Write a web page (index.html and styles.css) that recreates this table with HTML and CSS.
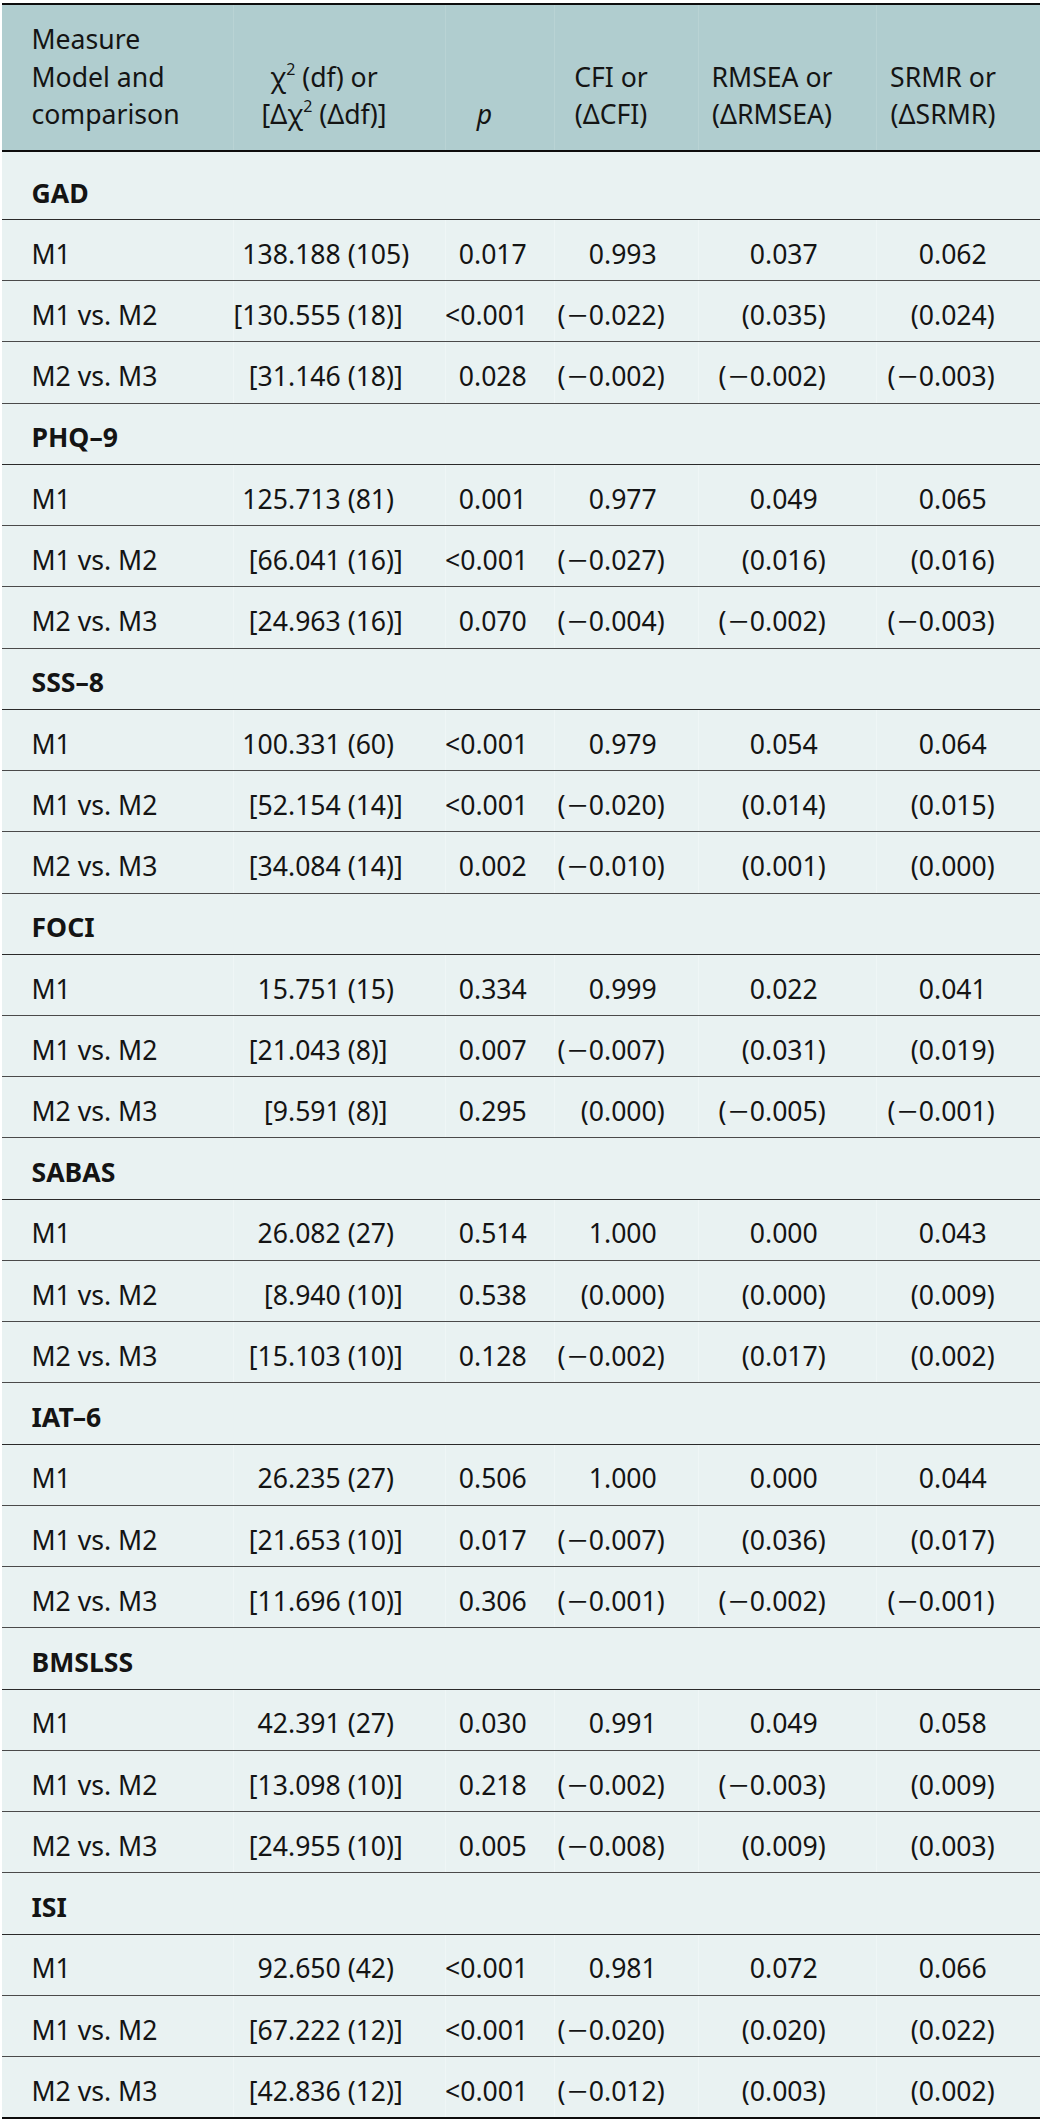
FILE: index.html
```html
<!DOCTYPE html>
<html lang="en">
<head>
<meta charset="utf-8">
<title>Measurement invariance</title>
<link rel="stylesheet" href="styles.css">
</head>
<body>
<div class="wrap">
<table class="tbl">
<colgroup>
<col class="w1"><col class="w2"><col class="w3"><col class="w4"><col class="w5"><col class="w6">
</colgroup>
<thead>
<tr>
<th class="h1">Measure<br>Model and<br>comparison</th>
<th class="hc">χ<sup>2</sup> (df) or<br>[Δχ<sup>2</sup> (Δdf)]</th>
<th class="hc"><i>p</i></th>
<th class="hc">CFI or<br>(ΔCFI)</th>
<th class="hc">RMSEA or<br>(ΔRMSEA)</th>
<th class="hc">SRMR or<br>(ΔSRMR)</th>
</tr>
</thead>
<tbody>
<tr class="sec first"><td colspan="6">GAD</td></tr>
<tr><td class="lbl">M1</td><td class="c2">138<span class="f">.188 (105)</span></td><td class="c3">0<span class="f">.017</span></td><td class="c4">0<span class="f">.993</span></td><td class="c5">0<span class="f">.037</span></td><td class="c6">0<span class="f">.062</span></td></tr>
<tr><td class="lbl">M1 vs. M2</td><td class="c2">[130<span class="f">.555 (18)]</span></td><td class="c3">&lt;0<span class="f">.001</span></td><td class="c4">(<span class="mn">−</span>0<span class="f">.022)</span></td><td class="c5">(0<span class="f">.035)</span></td><td class="c6">(0<span class="f">.024)</span></td></tr>
<tr><td class="lbl">M2 vs. M3</td><td class="c2">[31<span class="f">.146 (18)]</span></td><td class="c3">0<span class="f">.028</span></td><td class="c4">(<span class="mn">−</span>0<span class="f">.002)</span></td><td class="c5">(<span class="mn">−</span>0<span class="f">.002)</span></td><td class="c6">(<span class="mn">−</span>0<span class="f">.003)</span></td></tr>

<tr class="sec"><td colspan="6">PHQ–9</td></tr>
<tr><td class="lbl">M1</td><td class="c2">125<span class="f">.713 (81)</span></td><td class="c3">0<span class="f">.001</span></td><td class="c4">0<span class="f">.977</span></td><td class="c5">0<span class="f">.049</span></td><td class="c6">0<span class="f">.065</span></td></tr>
<tr><td class="lbl">M1 vs. M2</td><td class="c2">[66<span class="f">.041 (16)]</span></td><td class="c3">&lt;0<span class="f">.001</span></td><td class="c4">(<span class="mn">−</span>0<span class="f">.027)</span></td><td class="c5">(0<span class="f">.016)</span></td><td class="c6">(0<span class="f">.016)</span></td></tr>
<tr><td class="lbl">M2 vs. M3</td><td class="c2">[24<span class="f">.963 (16)]</span></td><td class="c3">0<span class="f">.070</span></td><td class="c4">(<span class="mn">−</span>0<span class="f">.004)</span></td><td class="c5">(<span class="mn">−</span>0<span class="f">.002)</span></td><td class="c6">(<span class="mn">−</span>0<span class="f">.003)</span></td></tr>

<tr class="sec"><td colspan="6">SSS–8</td></tr>
<tr><td class="lbl">M1</td><td class="c2">100<span class="f">.331 (60)</span></td><td class="c3">&lt;0<span class="f">.001</span></td><td class="c4">0<span class="f">.979</span></td><td class="c5">0<span class="f">.054</span></td><td class="c6">0<span class="f">.064</span></td></tr>
<tr><td class="lbl">M1 vs. M2</td><td class="c2">[52<span class="f">.154 (14)]</span></td><td class="c3">&lt;0<span class="f">.001</span></td><td class="c4">(<span class="mn">−</span>0<span class="f">.020)</span></td><td class="c5">(0<span class="f">.014)</span></td><td class="c6">(0<span class="f">.015)</span></td></tr>
<tr><td class="lbl">M2 vs. M3</td><td class="c2">[34<span class="f">.084 (14)]</span></td><td class="c3">0<span class="f">.002</span></td><td class="c4">(<span class="mn">−</span>0<span class="f">.010)</span></td><td class="c5">(0<span class="f">.001)</span></td><td class="c6">(0<span class="f">.000)</span></td></tr>

<tr class="sec"><td colspan="6">FOCI</td></tr>
<tr><td class="lbl">M1</td><td class="c2">15<span class="f">.751 (15)</span></td><td class="c3">0<span class="f">.334</span></td><td class="c4">0<span class="f">.999</span></td><td class="c5">0<span class="f">.022</span></td><td class="c6">0<span class="f">.041</span></td></tr>
<tr><td class="lbl">M1 vs. M2</td><td class="c2">[21<span class="f">.043 (8)]</span></td><td class="c3">0<span class="f">.007</span></td><td class="c4">(<span class="mn">−</span>0<span class="f">.007)</span></td><td class="c5">(0<span class="f">.031)</span></td><td class="c6">(0<span class="f">.019)</span></td></tr>
<tr><td class="lbl">M2 vs. M3</td><td class="c2">[9<span class="f">.591 (8)]</span></td><td class="c3">0<span class="f">.295</span></td><td class="c4">(0<span class="f">.000)</span></td><td class="c5">(<span class="mn">−</span>0<span class="f">.005)</span></td><td class="c6">(<span class="mn">−</span>0<span class="f">.001)</span></td></tr>

<tr class="sec"><td colspan="6">SABAS</td></tr>
<tr><td class="lbl">M1</td><td class="c2">26<span class="f">.082 (27)</span></td><td class="c3">0<span class="f">.514</span></td><td class="c4">1<span class="f">.000</span></td><td class="c5">0<span class="f">.000</span></td><td class="c6">0<span class="f">.043</span></td></tr>
<tr><td class="lbl">M1 vs. M2</td><td class="c2">[8<span class="f">.940 (10)]</span></td><td class="c3">0<span class="f">.538</span></td><td class="c4">(0<span class="f">.000)</span></td><td class="c5">(0<span class="f">.000)</span></td><td class="c6">(0<span class="f">.009)</span></td></tr>
<tr><td class="lbl">M2 vs. M3</td><td class="c2">[15<span class="f">.103 (10)]</span></td><td class="c3">0<span class="f">.128</span></td><td class="c4">(<span class="mn">−</span>0<span class="f">.002)</span></td><td class="c5">(0<span class="f">.017)</span></td><td class="c6">(0<span class="f">.002)</span></td></tr>

<tr class="sec"><td colspan="6">IAT–6</td></tr>
<tr><td class="lbl">M1</td><td class="c2">26<span class="f">.235 (27)</span></td><td class="c3">0<span class="f">.506</span></td><td class="c4">1<span class="f">.000</span></td><td class="c5">0<span class="f">.000</span></td><td class="c6">0<span class="f">.044</span></td></tr>
<tr><td class="lbl">M1 vs. M2</td><td class="c2">[21<span class="f">.653 (10)]</span></td><td class="c3">0<span class="f">.017</span></td><td class="c4">(<span class="mn">−</span>0<span class="f">.007)</span></td><td class="c5">(0<span class="f">.036)</span></td><td class="c6">(0<span class="f">.017)</span></td></tr>
<tr><td class="lbl">M2 vs. M3</td><td class="c2">[11<span class="f">.696 (10)]</span></td><td class="c3">0<span class="f">.306</span></td><td class="c4">(<span class="mn">−</span>0<span class="f">.001)</span></td><td class="c5">(<span class="mn">−</span>0<span class="f">.002)</span></td><td class="c6">(<span class="mn">−</span>0<span class="f">.001)</span></td></tr>

<tr class="sec"><td colspan="6">BMSLSS</td></tr>
<tr><td class="lbl">M1</td><td class="c2">42<span class="f">.391 (27)</span></td><td class="c3">0<span class="f">.030</span></td><td class="c4">0<span class="f">.991</span></td><td class="c5">0<span class="f">.049</span></td><td class="c6">0<span class="f">.058</span></td></tr>
<tr><td class="lbl">M1 vs. M2</td><td class="c2">[13<span class="f">.098 (10)]</span></td><td class="c3">0<span class="f">.218</span></td><td class="c4">(<span class="mn">−</span>0<span class="f">.002)</span></td><td class="c5">(<span class="mn">−</span>0<span class="f">.003)</span></td><td class="c6">(0<span class="f">.009)</span></td></tr>
<tr><td class="lbl">M2 vs. M3</td><td class="c2">[24<span class="f">.955 (10)]</span></td><td class="c3">0<span class="f">.005</span></td><td class="c4">(<span class="mn">−</span>0<span class="f">.008)</span></td><td class="c5">(0<span class="f">.009)</span></td><td class="c6">(0<span class="f">.003)</span></td></tr>

<tr class="sec"><td colspan="6">ISI</td></tr>
<tr><td class="lbl">M1</td><td class="c2">92<span class="f">.650 (42)</span></td><td class="c3">&lt;0<span class="f">.001</span></td><td class="c4">0<span class="f">.981</span></td><td class="c5">0<span class="f">.072</span></td><td class="c6">0<span class="f">.066</span></td></tr>
<tr><td class="lbl">M1 vs. M2</td><td class="c2">[67<span class="f">.222 (12)]</span></td><td class="c3">&lt;0<span class="f">.001</span></td><td class="c4">(<span class="mn">−</span>0<span class="f">.020)</span></td><td class="c5">(0<span class="f">.020)</span></td><td class="c6">(0<span class="f">.022)</span></td></tr>
<tr class="last"><td class="lbl">M2 vs. M3</td><td class="c2">[42<span class="f">.836 (12)]</span></td><td class="c3">&lt;0<span class="f">.001</span></td><td class="c4">(<span class="mn">−</span>0<span class="f">.012)</span></td><td class="c5">(0<span class="f">.003)</span></td><td class="c6">(0<span class="f">.002)</span></td></tr>
</tbody>
</table>
</div>
</body>
</html>
```
FILE: styles.css
```css
html, body {
  margin: 0;
  padding: 0;
  background: #ffffff;
}

.wrap {
  padding: 2.5px 3px 2px 2px;
}

.tbl {
  width: 1038px;
  table-layout: fixed;
  border-collapse: separate;
  border-spacing: 0;
  font-family: "Noto Sans", "Open Sans", sans-serif;
  font-size: 26.6px;
  line-height: 37.5px;
  color: #141414;
}

.w1 { width: 231px; }
.w2 { width: 212px; }
.w3 { width: 109px; }
.w4 { width: 144px; }
.w5 { width: 178px; }
.w6 { width: 164px; }

thead th {
  background: #b0cdcf;
  font-weight: normal;
  vertical-align: bottom;
  border-top: 2px solid #0d0d0d;
  border-bottom: 2px solid #0d0d0d;
  padding: 16.5px 0 16px 0;
  white-space: nowrap;
}

thead th + th {
  box-shadow: inset 1px 0 0 rgba(255, 255, 255, 0.12);
}

.h1 {
  text-align: left;
  padding-left: 29.5px;
}

.hc {
  text-align: center;
  padding-right: 30px;
}

.hc i {
  font-style: italic;
}

sup {
  font-size: 16px;
  line-height: 0;
  vertical-align: 12px;
}

tbody td {
  background: #e9f2f2;
  border-bottom: 1px solid #4a4a4a;
  padding: 15.8px 0 6.95px 0;
  white-space: nowrap;
}

tbody td + td {
  box-shadow: inset 1px 0 0 rgba(255, 255, 255, 0.3);
}

.sec td {
  font-weight: bold;
  padding-left: 29.5px;
  border-bottom-color: #2a2a2a;
}

.first td {
  padding-top: 23px;
}

.last td {
  border-bottom: 2px solid #0d0d0d;
}

.lbl {
  padding-left: 29.5px;
}

.c2, .c3, .c4, .c5, .c6 {
  text-align: right;
}

.f {
  display: inline-block;
  text-align: left;
}

.c2 { padding-right: 17px; }
.c2 .f { width: 140px; }

.c3 { padding-right: 14px; }
.c3 .f { width: 66px; }

.c4 { padding-right: 14px; }
.c4 .f { width: 80px; }

.c5 { padding-right: 31px; }
.c5 .f { width: 80px; }

.c6 { padding-right: 26px; }
.c6 .f { width: 80px; }

.mn {
  display: inline-block;
  padding: 0 4px;
  transform: scaleX(1.35);
}
```
